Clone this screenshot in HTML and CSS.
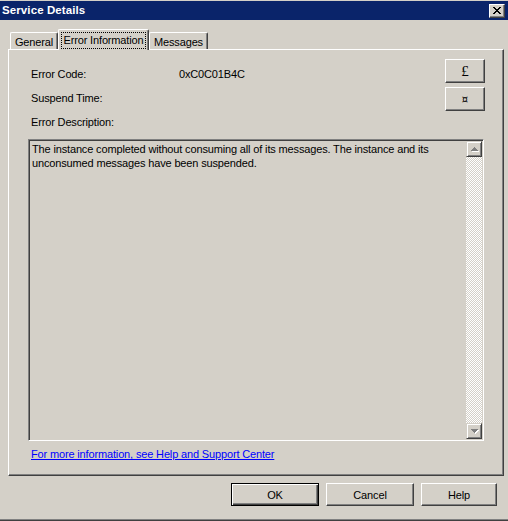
FILE: index.html
```html
<!DOCTYPE html>
<html>
<head>
<meta charset="utf-8">
<link rel="stylesheet" href="styles.css">
</head>
<body>
<div class="window">
  <div class="titlebar">
    <span class="title">Service Details</span>
    <span class="close">
      <svg width="8" height="7" viewBox="0 0 8 7"><path d="M0 0h2v1h1v1h2v-1h1v-1h2v1h-1v1h-1v1h-1v1h1v1h1v1h1v1h-2v-1h-1v-1h-2v1h-1v1h-2v-1h1v-1h1v-1h1v-1h-1v-1h-1v-1h-1z" fill="#000"/></svg>
    </span>
  </div>
  <div class="tabs">
    <div class="tab first">General</div>
    <div class="tab active"><span class="focus">Error Information</span></div>
    <div class="tab last">Messages</div>
  </div>
  <div class="panel">
    <div class="top">
      <div class="fields">
        <div class="row"><span class="label">Error Code:</span><span class="value">0xC0C01B4C</span></div>
        <div class="row"><span class="label">Suspend Time:</span></div>
        <div class="row"><span class="label">Error Description:</span></div>
      </div>
      <div class="side">
        <div class="btn small">£</div>
        <div class="btn small cur">¤</div>
      </div>
    </div>
    <div class="textbox">
      <div class="text">The instance completed without consuming all of its messages. The instance and its unconsumed messages have been suspended.</div>
      <div class="scrollbar">
        <div class="sbtn"><svg width="7" height="5" viewBox="0 0 7 5"><path d="M3 0h1v1h1v1h1v1h1v1h-7v-1h1v-1h1v-1h1z" fill="#808080"/></svg></div>
        <div class="track"></div>
        <div class="sbtn"><svg width="7" height="5" viewBox="0 0 7 5"><path d="M0 0h7v1h-1v1h-1v1h-1v1h-1v-1h-1v-1h-1v-1h-1z" fill="#808080"/></svg></div>
      </div>
    </div>
    <a class="link" href="#">For more information, see Help and Support Center</a>
  </div>
  <div class="actions">
    <div class="btn big default">OK</div>
    <div class="btn big">Cancel</div>
    <div class="btn big help">Help</div>
  </div>
</div>
</body>
</html>
```
FILE: styles.css
```css
html, body {
  margin: 0;
  padding: 0;
  background: #d4d0c8;
}
body {
  font-family: "Liberation Sans", Arial, sans-serif;
  font-size: 11px;
  letter-spacing: -0.15px;
  color: #000;
}
.window {
  width: 508px;
  height: 521px;
  box-sizing: border-box;
  padding-top: 1px;
  box-shadow: inset 0 -1px #404040, inset 0 -2px #808080;
  overflow: hidden;
}
.titlebar {
  height: 19px;
  background: #0a246a;
  display: flex;
  align-items: center;
  justify-content: space-between;
  padding: 0 3px 0 2px;
}
.title {
  color: #fff;
  font-weight: bold;
  font-size: 11.5px;
  letter-spacing: 0.1px;
  line-height: 19px;
}
.close {
  width: 16px;
  height: 14px;
  box-sizing: border-box;
  background: #d4d0c8;
  border: 1px solid;
  border-color: #fff #404040 #404040 #fff;
  box-shadow: inset -1px -1px #808080;
  display: flex;
  align-items: center;
  justify-content: center;
  margin-top: 1px;
}
.close svg { display: block; margin: 0 1px 1px 0; }

.tabs {
  display: flex;
  align-items: flex-end;
  height: 20px;
  margin-top: 9px;
  padding-left: 10px;
  position: relative;
  z-index: 2;
}
.tab {
  height: 17px;
  box-sizing: border-box;
  border-left: 1px solid #fff;
  border-top: 1px solid #fff;
  border-right: 1px solid #404040;
  box-shadow: inset -1px 0 #808080;
  border-top-left-radius: 2px;
  border-top-right-radius: 2px;
  line-height: 16px;
  background: #d4d0c8;
  white-space: nowrap;
  text-align: center;
  flex: none;
}
.tab.first { width: 48px; padding-top: 1px; }
.tab.active {
  height: 21px;
  margin-bottom: -1px;
  width: 91px;
  padding-top: 2px;
}
.focus {
  display: inline-block;
  outline: 1px dotted #000;
  padding: 0 2px;
  line-height: 15px;
}
.tab.last { width: 59px; padding-top: 1px; }

.panel {
  margin-left: 8px;
  width: 496px;
  height: 427px;
  box-sizing: border-box;
  border-left: 1px solid #fff;
  border-top: 1px solid #fff;
  border-right: 1px solid #404040;
  border-bottom: 1px solid #404040;
  box-shadow: inset -1px -1px #808080;
  padding: 9px 18px 0 19px;
  position: relative;
  z-index: 1;
}
.top {
  display: flex;
  justify-content: space-between;
  margin-bottom: 5px;
}
.fields { padding: 3px 0 0 3px; flex: 1; }
.row { height: 24px; line-height: 24px; display: flex; }
.label { width: 148px; flex: none; }
.side {
  display: flex;
  flex-direction: column;
  gap: 4px;
  flex: none;
}
.btn {
  box-sizing: border-box;
  background: #d4d0c8;
  border: 1px solid;
  border-color: #fff #404040 #404040 #fff;
  box-shadow: inset -1px -1px #808080;
  display: flex;
  align-items: center;
  justify-content: center;
  letter-spacing: 0;
}
.small {
  width: 40px;
  height: 24px;
  font-family: "Liberation Serif", serif;
  font-size: 15px;
}
.small.cur { font-family: "DejaVu Sans", sans-serif; font-size: 10px; }

.textbox {
  width: 456px;
  height: 302px;
  box-sizing: border-box;
  border: 1px solid;
  border-color: #808080 #fff #fff #808080;
  box-shadow: inset 1px 1px #404040, inset -1px -1px #d4d0c8;
  display: flex;
  padding: 1px;
}
.text {
  flex: 1;
  padding: 1px 2px 0 2px;
  line-height: 14px;
}
.scrollbar {
  width: 16px;
  display: flex;
  flex-direction: column;
}
.sbtn {
  width: 16px;
  height: 16px;
  box-sizing: border-box;
  background: #d4d0c8;
  border: 1px solid;
  border-color: #d4d0c8 #404040 #404040 #d4d0c8;
  box-shadow: inset 1px 1px #fff, inset -1px -1px #808080;
  display: flex;
  align-items: center;
  justify-content: center;
}
.sbtn svg { display: block; filter: drop-shadow(1px 1px 0 #fff); }
.track {
  flex: 1;
  background: repeating-conic-gradient(#fff 0 25%, #d4d0c8 0 50%) 0 0 / 2px 2px;
}
.link {
  display: inline-block;
  margin: 6px 0 0 3px;
  color: #0000ff;
  text-decoration: underline;
  line-height: 14px;
}
.actions {
  display: flex;
  justify-content: flex-end;
  gap: 7px;
  margin-top: 7px;
  padding-right: 11px;
}
.big {
  width: 88px;
  height: 23px;
  letter-spacing: -0.15px;
}
.big.help { width: 76px; }
.default {
  border: 1px solid #000;
  box-shadow: inset 1px 1px #fff, inset -1px -1px #404040, inset -2px -2px #808080;
}
```
